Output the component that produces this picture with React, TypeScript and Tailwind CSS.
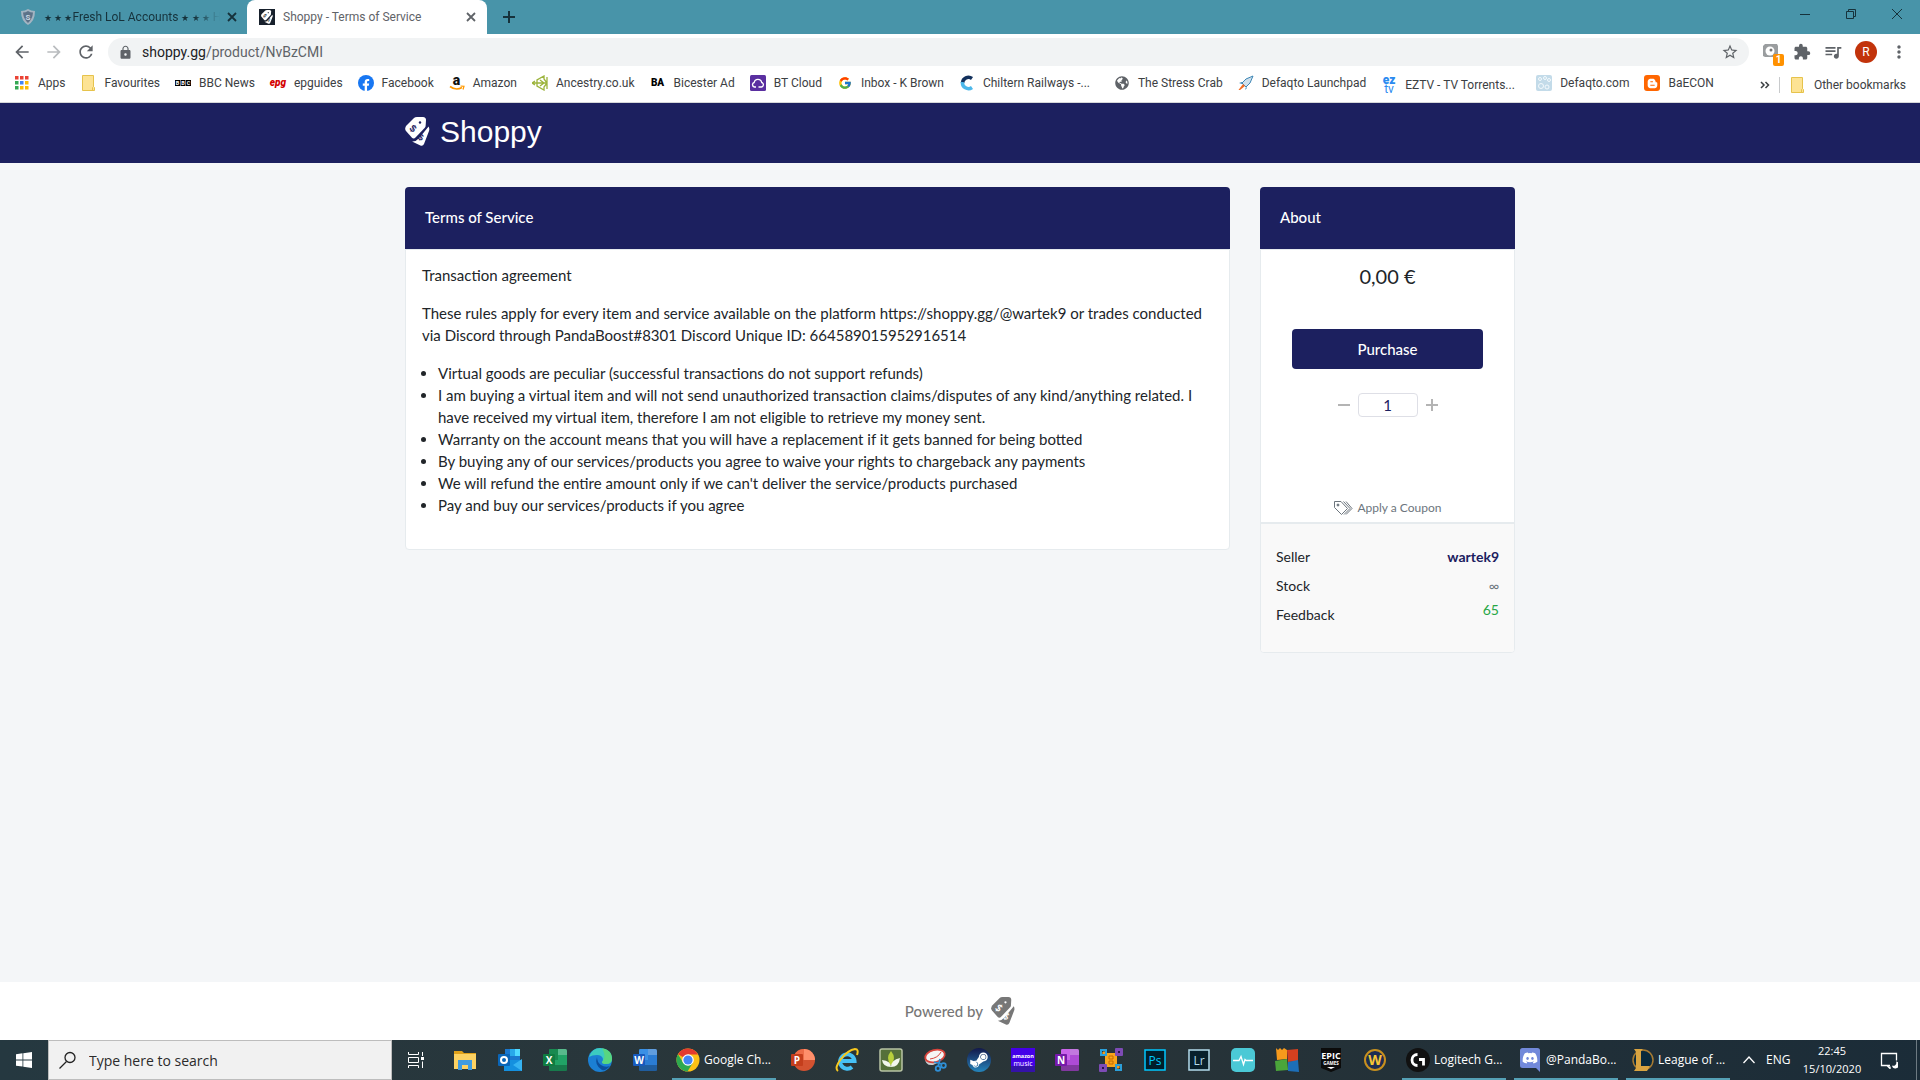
import { useState, type ReactNode } from "react";
import { FaBloggerB, FaDiscord, FaFacebookF, FaGlobeAmericas, FaSteamSymbol } from "react-icons/fa";
import { FcGoogle } from "react-icons/fc";
import {
  MdArrowBack,
  MdArrowForward,
  MdExtension,
  MdLock,
  MdMoreVert,
  MdQueueMusic,
  MdRefresh,
  MdStarBorder,
} from "react-icons/md";

const uiFont = "font-[Roboto,'Open_Sans',sans-serif]";
const pageFont = "font-[Lato,'Open_Sans',sans-serif]";
const winFont = "font-['Open_Sans','Noto_Sans',sans-serif]";

function ShoppyMark({ className, ink }: { className: string; ink: string }) {
  return (
    <svg viewBox="0 0 25 29" className={className} aria-hidden="true">
      <path
        fill="currentColor"
        d="M1 9 9 1Q10 0 12 0h6q3 .3 3 3l-.4 6q-.1 1-1 2L10.500 20.500Q9 22 7.200 21L1 14Q-.6 12 1 9Z"
      />
      <path fill="currentColor" d="M23.600 9.600Q24.800 12 24 14l-5 13q-1 2.300-3.600 1.500L7 24.500q4 .3 7-3.200Z" />
      <circle cx="15" cy="5.500" r="1.200" fill={ink} />
      <text x="8.500" y="15" fontSize="10" fontWeight="700" textAnchor="middle" fill={ink} transform="rotate(40 8.500 11)">
        $
      </text>
      <text x="16" y="23.500" fontSize="9" fontWeight="700" textAnchor="middle" fill={ink} transform="rotate(25 16 20)">
        $
      </text>
    </svg>
  );
}

function Folder() {
  return (
    <svg viewBox="0 0 16 16" className="size-4" aria-hidden="true">
      <path d="M1.500.5h11v11l1 1v3h-12Z" fill="#fde394" stroke="#e6c34c" />
      <path d="M11.500 15.500v-3l1-1" fill="none" stroke="#e6c34c" />
    </svg>
  );
}

const appColors = ["#ea4335", "#ea4335", "#ea4335", "#34a853", "#4285f4", "#fbbc04", "#34a853", "#fbbc04", "#fbbc04"];

type Bookmark = { label: string; icon: ReactNode; wide?: boolean };

const bookmarks: Bookmark[] = [
  {
    label: "Apps",
    icon: (
      <svg viewBox="0 0 16 16" className="size-4">
        {appColors.map((fill, i) => (
          <rect key={i} x={1 + (i % 3) * 5} y={1 + Math.floor(i / 3) * 5} width="3.500" height="3.500" fill={fill} />
        ))}
      </svg>
    ),
  },
  { label: "Favourites", icon: <Folder /> },
  {
    label: "BBC News",
    icon: (
      <svg viewBox="0 0 16 16" className="size-4">
        {["B", "B", "C"].map((letter, i) => (
          <g key={i}>
            <rect x={i * 5.500} y="5" width="5" height="6" fill="#000" />
            <text x={i * 5.500 + 2.500} y="10" fontSize="5.500" fontWeight="700" textAnchor="middle" fill="#fff">
              {letter}
            </text>
          </g>
        ))}
      </svg>
    ),
  },
  { label: "epguides", icon: <span className="text-[10px] leading-4 font-black text-[#d40000] italic">epg</span> },
  {
    label: "Facebook",
    icon: (
      <span className="flex size-4 items-end justify-center rounded-full bg-[#1877f2] text-white">
        <FaFacebookF size={12} />
      </span>
    ),
  },
  {
    label: "Amazon",
    icon: (
      <svg viewBox="0 0 16 16" className="size-4 overflow-visible">
        <text x="7.500" y="10" fontSize="14" fontWeight="900" textAnchor="middle" fill="#111">a</text>
        <path d="M1 11.500q6 4.500 12 1" fill="none" stroke="#f90" strokeWidth="1.600" />
        <path d="m11.500 11 3.500.300-1 3.200" fill="none" stroke="#f90" strokeWidth="1.200" />
      </svg>
    ),
  },
  {
    label: "Ancestry.co.uk",
    icon: (
      <svg viewBox="0 0 16 16" className="size-4" fill="none" stroke="#9cb43c" strokeWidth="1.300">
        <path d="M0 8h15M15 2v12M5 8V5l7-4v3l3 4M5 8v3l7 4v-3l3-4M8 5l4 3-4 3M0 8l3-2M0 8l3 2" />
      </svg>
    ),
  },
  { label: "Bicester Ad", icon: <span className="text-[10px] leading-4 font-black text-black">BA</span> },
  {
    label: "BT Cloud",
    icon: (
      <svg viewBox="0 0 16 16" className="size-4">
        <rect width="16" height="16" rx="1.500" fill="#5a2fa0" />
        <path
          d="M6 12H4.500a2.300 2.300 0 0 1-.3-4.500 3.800 3.800 0 0 1 7.500 0 2.300 2.300 0 0 1-.2 4.500H8.500"
          fill="none"
          stroke="#fff"
          strokeWidth="1.300"
        />
      </svg>
    ),
  },
  { label: "Inbox - K Brown", icon: <FcGoogle size={14} /> },
  {
    label: "Chiltern Railways -...",
    wide: true,
    icon: (
      <svg viewBox="0 0 16 16" className="size-4" fill="none" strokeWidth="3.500">
        <path d="M13 3.500A6 6 0 0 0 3.500 8" stroke="#12305c" />
        <path d="M3.500 7a6 6 0 0 0 9.500 5.500" stroke="#4db8ea" />
      </svg>
    ),
  },
  { label: "The Stress Crab", icon: <FaGlobeAmericas size={14} className="text-[#5f6368]" /> },
  {
    label: "Defaqto Launchpad",
    icon: (
      <svg viewBox="0 0 16 16" className="size-4">
        <path d="m4 8 4-4 7-3-3 7-4 4Z" fill="#cfe0ec" stroke="#3d86b5" />
        <path d="m4 7-3 1 3 1Zm4 5-1 3 2-2Z" fill="#3d86b5" />
        <path d="m5 9 2 2-5 4H.5Z" fill="#f26b21" />
      </svg>
    ),
  },
  {
    label: "EZTV - TV Torrents...",
    wide: true,
    icon: (
      <svg viewBox="0 0 16 20" className="h-5 w-4 overflow-visible" fill="#2a8af0">
        <text x="8" y="9" fontSize="12" fontWeight="900" textAnchor="middle">ez</text>
        <text x="8" y="18" fontSize="12" textAnchor="middle">tv</text>
      </svg>
    ),
  },
  {
    label: "Defaqto.com",
    icon: (
      <svg viewBox="0 0 16 16" className="size-4">
        <rect width="16" height="16" rx="2" fill="#c3dbe9" />
        <g fill="none" stroke="#f4fafd">
          <circle cx="4" cy="4" r="1.500" />
          <circle cx="9" cy="3" r="1.500" />
          <circle cx="13" cy="5" r="1.500" />
          <circle cx="5" cy="11" r="2.500" />
          <circle cx="11" cy="12" r="2" />
        </g>
      </svg>
    ),
  },
  {
    label: "BaECON",
    icon: (
      <span className="flex size-4 items-center justify-center rounded-[3px] bg-[#ff6600] text-white">
        <FaBloggerB size={11} />
      </span>
    ),
  },
];

function CloseIcon({ className }: { className: string }) {
  return (
    <svg viewBox="0 0 16 16" className={className} fill="none" stroke="currentColor" strokeWidth="1.800">
      <path d="m4 4 8 8M12 4l-8 8" />
    </svg>
  );
}

function Stars() {
  return <span className="text-[9px]">★ ★ ★</span>;
}

function TabStrip() {
  return (
    <div className="flex h-[34px] bg-[#4894a9] text-xs text-[#16323b]">
      <div className="flex w-[247px] items-center pr-[7px] pl-[20px]">
        <svg viewBox="0 0 16 16" className="mr-2 size-4 shrink-0">
          <path d="M8 0q3 2 7 2 0 10-7 14Q1 12 1 2q4 0 7-2Z" fill="#a3b4c2" />
          <path d="M8 2q2.500 1.500 5 1.500Q12.500 10 8 14 3.500 10 3 3.500 5.500 3.500 8 2Z" fill="#5d7389" />
          <text x="8" y="11" fontSize="8" fontWeight="700" textAnchor="middle" fill="#c8d6e2">S</text>
        </svg>
        <span className="flex-1 overflow-hidden mask-r-from-85% whitespace-nowrap">
          <Stars />
          Fresh LoL Accounts <Stars /> H
        </span>
        <button aria-label="Close tab" className="ml-1">
          <CloseIcon className="size-4" />
        </button>
      </div>
      <div className="flex w-[240px] items-center rounded-t-lg bg-white px-2 pl-3 text-[#5f6368]">
        <span className="mr-2 flex size-4 items-center justify-center bg-[#17202c] text-white">
          <ShoppyMark className="h-[14px]" ink="#17202c" />
        </span>
        <span className="flex-1 whitespace-nowrap">Shoppy - Terms of Service</span>
        <button aria-label="Close tab">
          <CloseIcon className="size-4" />
        </button>
      </div>
      <button aria-label="New tab" className="ml-3.5">
        <svg viewBox="0 0 16 16" className="size-4" fill="none" stroke="currentColor" strokeWidth="2">
          <path d="M8 2v12M2 8h12" />
        </svg>
      </button>
      <div className="ml-auto flex gap-[30px] pt-1.5 pr-[15px]">
        <button aria-label="Minimise" className="h-4">
          <svg viewBox="0 0 16 16" className="size-4" stroke="currentColor">
            <path d="M3 8.500h10" />
          </svg>
        </button>
        <button aria-label="Restore" className="h-4">
          <svg viewBox="0 0 16 16" className="size-4" fill="none" stroke="currentColor">
            <path d="M3.500 5.500h7v7h-7ZM5.500 5.500v-2h7v7h-2" />
          </svg>
        </button>
        <button aria-label="Close" className="h-4">
          <svg viewBox="0 0 16 16" className="size-4" stroke="currentColor">
            <path d="m3 3 10 10M13 3 3 13" />
          </svg>
        </button>
      </div>
    </div>
  );
}

function Toolbar() {
  return (
    <div className="flex h-9 items-center bg-white pr-[11px] pl-3 text-[#5f6368]">
      <div className="flex w-24 gap-3">
        <button aria-label="Back"><MdArrowBack size={20} /></button>
        <button aria-label="Forward" className="text-[#b9bcbf]"><MdArrowForward size={20} /></button>
        <button aria-label="Reload"><MdRefresh size={20} /></button>
      </div>
      <div className="flex h-7 flex-1 items-center rounded-full bg-[#f1f3f4] px-2.5">
        <MdLock size={15} />
        <div className="relative ml-[9px] flex-1 text-sm">
          <input
            aria-label="Address"
            defaultValue="shoppy.gg/product/NvBzCMI"
            className="block w-full bg-transparent text-[#5f6368] outline-none"
          />
          <span aria-hidden="true" className="pointer-events-none absolute top-0 left-0 bg-[#f1f3f4] text-[#202124]">
            shoppy.gg
          </span>
        </div>
        <button aria-label="Bookmark this tab"><MdStarBorder size={18} /></button>
      </div>
      <div className="ml-3 flex items-center gap-3">
        <button aria-label="Extension" className="relative size-5">
          <svg viewBox="0 0 20 20" className="size-5">
            <path d="M4 2h12l1 2v11H4l-2-1V4Z" fill="#9a9d9f" />
            <circle cx="9" cy="9" r="4.500" fill="#fff" />
            <circle cx="10" cy="8" r="1.500" fill="#777" />
          </svg>
          <span className="absolute top-3 left-3 h-3 w-[11px] rounded-[2px] bg-[#ff9100] text-center text-[10px] leading-3 font-bold text-white">
            1
          </span>
        </button>
        <button aria-label="Extensions"><MdExtension size={18} /></button>
        <button aria-label="Media"><MdQueueMusic size={20} /></button>
        <button aria-label="Profile" className="size-[22px] rounded-full bg-[#c2330b] text-xs text-white">R</button>
        <button aria-label="Menu"><MdMoreVert size={20} /></button>
      </div>
    </div>
  );
}

function BookmarksBar() {
  return (
    <nav className="flex h-[33px] items-center border-b border-[#d5d7d9] bg-white pb-0.5 pl-3.5 text-xs text-[#3c4043]">
      <ul className="flex gap-[15px]">
        {bookmarks.map((b) => (
          <li key={b.label}>
            <a href="#" className="flex items-center gap-2 whitespace-nowrap">
              <span className="flex w-4 justify-center">{b.icon}</span>
              <span className={b.wide ? "w-[116px]" : undefined}>{b.label}</span>
            </a>
          </li>
        ))}
      </ul>
      <button aria-label="More bookmarks" className="ml-auto">
        <svg viewBox="0 0 10 10" className="size-2.5" fill="none" stroke="currentColor" strokeWidth="1.500">
          <path d="m1 2 3 3-3 3M5.500 2l3 3-3 3" />
        </svg>
      </button>
      <a href="#" className="ml-[9px] flex h-4 items-center gap-2 border-l border-[#c8cacc] pr-3.5 pl-2.5">
        <Folder />
        Other bookmarks
      </a>
    </nav>
  );
}

const rules = [
  "Virtual goods are peculiar (successful transactions do not support refunds)",
  "I am buying a virtual item and will not send unauthorized transaction claims/disputes of any kind/anything related. I have received my virtual item, therefore I am not eligible to retrieve my money sent.",
  "Warranty on the account means that you will have a replacement if it gets banned for being botted",
  "By buying any of our services/products you agree to waive your rights to chargeback any payments",
  "We will refund the entire amount only if we can't deliver the service/products purchased",
  "Pay and buy our services/products if you agree",
];

function Card({ title, className, children }: { title: string; className: string; children: ReactNode }) {
  return (
    <section className={className}>
      <h2 className="rounded-t bg-[#1c205f] px-5 pt-[19px] pb-[21px] text-[15px] leading-[22px] font-medium text-white">
        {title}
      </h2>
      <div className="overflow-hidden rounded-b border border-[#e6ebee] bg-white">{children}</div>
    </section>
  );
}

function Terms() {
  return (
    <Card title="Terms of Service" className="min-w-0 flex-1">
      <div className="space-y-4 px-4 pt-3.5 pb-[33px] text-[15px] leading-[22px]">
        <p>Transaction agreement</p>
        <p>
          These rules apply for every item and service available on the platform https://shoppy.gg/@wartek9 or trades
          conducted via Discord through PandaBoost#8301 Discord Unique ID: 664589015952916514
        </p>
        <ul className="list-disc pl-4">
          {rules.map((rule) => (
            <li key={rule}>{rule}</li>
          ))}
        </ul>
      </div>
    </Card>
  );
}

function About() {
  const [quantity, setQuantity] = useState(1);

  return (
    <Card title="About" className="w-[255px] shrink-0">
      <div className="flex flex-col items-center px-[31px] pt-2.5 pb-1">
        <p className="text-xl leading-8">0,00 €</p>
        <button className="mt-[37px] h-10 w-full rounded bg-[#1c205f] text-[15px] font-medium text-white">
          Purchase
        </button>
        <div className="mt-6 flex items-center gap-2 text-[#b4b4b4]">
          <button aria-label="Decrease quantity" onClick={() => setQuantity(Math.max(1, quantity - 1))}>
            <svg viewBox="0 0 12 12" className="size-3" stroke="currentColor" strokeWidth="2">
              <path d="M0 6h12" />
            </svg>
          </button>
          <input
            aria-label="Quantity"
            inputMode="numeric"
            value={quantity}
            onChange={(e) => setQuantity(Number(e.target.value) || 1)}
            className="h-6 w-[60px] rounded border border-[#dedfe6] text-center text-[15px] text-[#1c205f]"
          />
          <button aria-label="Increase quantity" onClick={() => setQuantity(quantity + 1)}>
            <svg viewBox="0 0 12 12" className="size-3" stroke="currentColor" strokeWidth="2">
              <path d="M0 6h12M6 0v12" />
            </svg>
          </button>
        </div>
        <button className="mt-[81px] flex items-center gap-1 text-xs leading-5 text-[#6c757d]">
          <svg viewBox="0 0 20 16" className="h-4 w-5" fill="none" stroke="currentColor">
            <path d="M1.500 1.500v6l7 7 6-6-6.500-7Z" />
            <path d="M10.500 1.500 17 8.500l-6 6M13 1.500l6 7-6 6" />
            <circle cx="5" cy="5" r="1" fill="currentColor" />
          </svg>
          Apply a Coupon
        </button>
      </div>
      <dl className="grid grid-cols-2 gap-y-[7px] border-t-2 border-[#e6ebee] bg-[#f9f9f9] px-[15px] pt-[22px] pb-[26px] text-sm leading-[22px]">
        <dt>Seller</dt>
        <dd className="text-right font-bold text-[#1c205f]">
          <a href="#">wartek9</a>
        </dd>
        <dt>Stock</dt>
        <dd className="text-right text-[#6c757d]">∞</dd>
        <dt>Feedback</dt>
        <dd className="text-right leading-3 text-[#28a745]">65</dd>
      </dl>
    </Card>
  );
}

// Office-style tile: coloured sheet with a lettered badge on its left
function OfficeIcon({ letter, badge, sheet, light }: { letter: string; badge: string; sheet: string; light: string }) {
  return (
    <svg viewBox="0 0 24 24" className="size-6">
      <rect x="6" y="1" width="18" height="22" rx="1.500" fill={sheet} />
      <path d="M6 2.500Q6 1 7.500 1H15v11H6Z" fill={light} />
      <path d="M15 1h7.500Q24 1 24 2.500V7h-9Z" fill="#fff" opacity=".25" />
      <path d="M6 17h18v4.500q0 1.500-1.500 1.500h-15Q6 23 6 21.500Z" opacity=".25" />
      <rect y="6" width="12" height="12" rx="1" fill={badge} />
      <text x="6" y="15.500" fontSize="10" fontWeight="700" textAnchor="middle" fill="#fff">{letter}</text>
    </svg>
  );
}

function AdobeIcon({ text, color, bg }: { text: string; color: string; bg: string }) {
  return (
    <svg viewBox="0 0 24 24" className="size-6">
      <rect x="2" y="2" width="20" height="20" fill={bg} stroke={color} strokeWidth="1.500" />
      <text x="12" y="16.500" fontSize="12" textAnchor="middle" fill={color}>{text}</text>
    </svg>
  );
}

const pinnedLeft: { label: string; icon: ReactNode }[] = [
  {
    label: "File Explorer",
    icon: (
      <svg viewBox="0 0 24 24" className="size-6">
        <path d="M1 3h8l2 2h12v16H1Z" fill="#e0a11a" />
        <path d="M1 6h22v15H1Z" fill="#fdd262" />
        <path d="M5 12h14v10h-4v-5H9v5H5Z" fill="#3f9be0" />
      </svg>
    ),
  },
  {
    label: "Outlook",
    icon: (
      <svg viewBox="0 0 24 24" className="size-6">
        <rect x="7" y="1" width="15" height="14" fill="#1a78cf" />
        <path d="M12 1h5v7h-5Z" fill="#28a8ea" />
        <path d="M17 1h5v7h-5Z" fill="#50d9ff" />
        <path d="M6 12h18v11H6Z" fill="#1490df" />
        <path d="m24 11-9 6 9 6Z" fill="#36b3f2" />
        <rect y="6" width="12" height="12" rx="1" fill="#0a66b8" />
        <circle cx="6" cy="12" r="3" fill="none" stroke="#fff" strokeWidth="2" />
      </svg>
    ),
  },
  { label: "Excel", icon: <OfficeIcon letter="X" badge="#107c41" sheet="#21a366" light="#188a50" /> },
  {
    label: "Edge",
    icon: (
      <svg viewBox="0 0 24 24" className="size-6">
        <circle cx="12" cy="12" r="12" fill="#1b7fd3" />
        <path d="M1 9Q4 0 12 0q12 1 12 11 0 5-6 5-4 0-4-2 1-1 1-3-1-4-6-4-5 0-8 2Z" fill="#3ccbc0" />
        <path d="M14 0q10 2 10 11 0 5-6 5-4 0-4-2 5-5 0-14Z" fill="#62d96b" opacity=".75" />
        <path d="M9 9q-3 8 5 13 4 1 8-4-5 2-9-1-4-3-4-8Z" fill="#0c4f9c" />
      </svg>
    ),
  },
  { label: "Word", icon: <OfficeIcon letter="W" badge="#185abd" sheet="#2b7cd3" light="#3a90e5" /> },
];

const pinnedRight: { label: string; icon: ReactNode }[] = [
  {
    label: "PowerPoint",
    icon: (
      <svg viewBox="0 0 24 24" className="size-6">
        <circle cx="13" cy="12" r="11" fill="#d35230" />
        <path d="M13 1a11 11 0 0 1 11 11H13Z" fill="#ff8f6b" />
        <path d="M13 1A11 11 0 0 0 2 12h11Z" fill="#ed6c47" />
        <rect y="6" width="12" height="12" rx="1" fill="#c43e1c" />
        <text x="6" y="15.500" fontSize="10" fontWeight="700" textAnchor="middle" fill="#fff">P</text>
      </svg>
    ),
  },
  {
    label: "Internet Explorer",
    icon: (
      <svg viewBox="0 0 24 24" className="size-6" fill="none">
        <path d="M6 13h13.500A7.200 7.200 0 1 0 17 19" stroke="#46c0f5" strokeWidth="4" />
        <path d="M3 23Q-1 20 6 11T20 1q4 0 2 6" stroke="#f7c81e" strokeWidth="2" />
      </svg>
    ),
  },
  {
    label: "Family tree",
    icon: (
      <svg viewBox="0 0 24 24" className="size-6">
        <rect x="1" y="1" width="22" height="22" rx="2" fill="#56703a" stroke="#b8c4a4" strokeWidth="1.500" />
        <path d="M12 3q6 7 0 15-6-8 0-15Z" fill="#b9cf3c" />
        <path d="M12 19q0-7 9-9-1 9-9 9ZM12 19q0-6-9-7 1 7 9 7Z" fill="#f3f6ec" />
      </svg>
    ),
  },
  {
    label: "Snipping Tool",
    icon: (
      <svg viewBox="0 0 24 24" className="size-6" fill="none">
        <path d="M2 10Q2 18 10 17q9-3 12-12Z" fill="#c9ced2" />
        <ellipse cx="12" cy="8" rx="10" ry="6" fill="#f5f5f5" stroke="#d8443c" strokeWidth="1.800" transform="rotate(-15 12 8)" />
        <path d="M7 11q8-1 11-7" stroke="#d8443c" />
        <circle cx="15" cy="20.500" r="2.300" stroke="#2f8fd6" strokeWidth="1.800" />
        <circle cx="20.500" cy="17.500" r="2.300" stroke="#2f8fd6" strokeWidth="1.800" />
        <path d="m11 14 8 2M17 11l-2 8" stroke="#2f8fd6" strokeWidth="1.800" />
      </svg>
    ),
  },
  {
    label: "Steam",
    icon: (
      <span className="flex size-6 items-center justify-center rounded-full bg-linear-to-b from-[#12184a] to-[#2486bd] text-white">
        <FaSteamSymbol size={20} />
      </span>
    ),
  },
  {
    label: "Amazon Music",
    icon: (
      <svg viewBox="0 0 24 24" className="size-6">
        <rect width="24" height="24" fill="#4400e8" />
        <path d="M0 18h24v6H0Z" fill="#3412a8" />
        <text x="12" y="10" fontSize="5.500" fontWeight="700" textAnchor="middle" fill="#fff">amazon</text>
        <text x="12" y="18" fontSize="7" textAnchor="middle" fill="#fff">music</text>
      </svg>
    ),
  },
  { label: "OneNote", icon: <OfficeIcon letter="N" badge="#7719aa" sheet="#ae4bd5" light="#ca64ea" /> },
  {
    label: "Workspace",
    icon: (
      <svg viewBox="0 0 24 24" className="size-6">
        <path d="m4 4 16 16M20 4 4 20" stroke="#f39a1e" strokeWidth="3" />
        <rect x="6" y="5" width="12" height="14" fill="#f9a51b" />
        <path d="M10 8h4v3h-4zM10 13h4v3h-4z" fill="none" stroke="#c76c00" />
        <g fill="#7d4bb5">
          <rect x="16" y="0" width="8" height="8" rx="1" />
          <rect x="0" y="16" width="8" height="8" rx="1" />
        </g>
        <path d="M2 2h5v5H2zM17 17h5v5h-5z" fill="none" stroke="#2c9fd9" strokeWidth="2" />
        <path d="M19 3h2v2h-2zM3 19h2v2H3z" fill="#2a1447" />
      </svg>
    ),
  },
  { label: "Photoshop", icon: <AdobeIcon text="Ps" color="#00c8ff" bg="#001e2b" /> },
  { label: "Lightroom", icon: <AdobeIcon text="Lr" color="#b4dcec" bg="#08202c" /> },
  {
    label: "Health monitor",
    icon: (
      <svg viewBox="0 0 24 24" className="size-6">
        <rect width="24" height="24" rx="5" fill="#4bc9d6" />
        <path d="M2 12.500h6l2-4 2.500 8 1.500-5 1 1h7" fill="none" stroke="#fff" strokeWidth="1.300" />
      </svg>
    ),
  },
  {
    label: "AVG",
    icon: (
      <svg viewBox="0 0 24 24" className="size-6">
        <path d="m1 0 2 2 2-2 2 2 2-2 3 2v9L2 12Z" fill="#f79a1c" />
        <path d="m12 2 11-1v12l-10 1Z" fill="#d5401f" />
        <path d="m0 13 12-2 1 11-12 1Z" fill="#4aa53a" />
        <path d="m13 14 10-2 1 12-11-1Z" fill="#1d6fb8" />
      </svg>
    ),
  },
  {
    label: "Epic Games",
    icon: (
      <svg viewBox="0 0 24 24" className="size-6">
        <path d="M2 0h20v20l-10 4-10-4Z" fill="#0b0b0b" />
        <text x="12" y="11" fontSize="9" fontWeight="700" textAnchor="middle" fill="#fff">EPIC</text>
        <text x="12" y="17" fontSize="4.500" fontWeight="700" textAnchor="middle" fill="#fff">GAMES</text>
        <path d="M8 19h8l-4 2Z" fill="#fff" />
      </svg>
    ),
  },
  {
    label: "World of Warcraft",
    icon: (
      <svg viewBox="0 0 24 24" className="size-6">
        <circle cx="12" cy="12" r="10" fill="#1d2c52" stroke="#c8901e" strokeWidth="2" />
        <text x="12" y="17" fontSize="14" fontWeight="700" textAnchor="middle" fill="#f7c535">W</text>
      </svg>
    ),
  },
];

const chromeIcon = (
  <svg viewBox="0 0 24 24" className="size-6">
    <circle cx="12" cy="12" r="11.500" fill="#fbc116" />
    <path d="M12 12 2 6.200A11.500 11.500 0 0 1 22 6.500H12Z" fill="#e33b2e" />
    <path d="M2 6.200A11.500 11.500 0 0 0 11.500 23.500L16.700 15 7 14.500Z" fill="#2da94f" />
    <circle cx="12" cy="12" r="5.800" fill="#fff" />
    <circle cx="12" cy="12" r="4.600" fill="#4285f4" />
  </svg>
);

const openWindows = [
  {
    label: "Logitech G...",
    icon: (
      <svg viewBox="0 0 24 24" className="size-6">
        <circle cx="12" cy="12" r="12" fill="#111" />
        <path d="M11.500 6.500a5.500 5.500 0 0 0 0 11M13 11.500h4.500v6" fill="none" stroke="#fff" strokeWidth="2.800" />
      </svg>
    ),
  },
  {
    label: "@PandaBo...",
    icon: (
      <svg viewBox="0 0 20 24" className="h-6 w-5">
        <path d="M2.500 0h15Q20 0 20 2.500V24l-4-4H2.500Q0 20 0 17.500v-15Q0 0 2.500 0Z" fill="#7289da" />
        <FaDiscord x="2" y="2" size={16} color="#fff" />
      </svg>
    ),
  },
  {
    label: "League of ...",
    icon: (
      <svg viewBox="0 0 24 24" className="size-6">
        <circle cx="13" cy="12" r="10" fill="#0b2a3c" stroke="#a87b32" strokeWidth="1.500" />
        <path d="M4 1h9l-2 2v15h9l-3 5H4l2-3V4Z" fill="#d9a441" />
      </svg>
    ),
  },
];

function WindowButton({ label, icon }: { label: string; icon: ReactNode }) {
  return (
    <button className="flex h-full w-[104px] items-center gap-1 border-b-2 border-[#55a0b5] pt-0.5 pl-1 text-xs whitespace-nowrap">
      <span className="flex w-6 shrink-0 justify-center">{icon}</span>
      <span>{label}</span>
    </button>
  );
}

function Taskbar() {
  return (
    <div className={`flex h-10 items-center bg-linear-to-r from-[#253840] via-[#2a3538] to-[#1b2c38] text-white ${winFont}`}>
      <button aria-label="Start" className="flex w-12 justify-center">
        <svg viewBox="0 0 16 16" className="size-4" fill="#fff">
          <path d="m0 2.200 6.500-.9v6.200H0ZM7.300 1.200 16 0v7.500H7.300ZM0 8.400h6.500v6.200L0 13.700ZM7.300 8.400H16V16l-8.700-1.200Z" />
        </svg>
      </button>
      <label className="flex h-full w-[344px] items-center gap-3 border border-[#bdbdbd] bg-[#f1f1f1] px-2.5 text-[#222]">
        <svg viewBox="0 0 18 18" className="size-[18px] shrink-0" fill="none" stroke="currentColor" strokeWidth="1.300">
          <circle cx="11" cy="6.500" r="5" />
          <path d="m7.500 10.500-7 7" />
        </svg>
        <input
          aria-label="Search"
          placeholder="Type here to search"
          className="w-full bg-transparent pt-0.5 text-sm outline-none placeholder:text-[#2b2b2b]"
        />
      </label>
      <button aria-label="Task view" className="ml-0.5 flex w-11 justify-center">
        <svg viewBox="0 0 16 16" className="size-4" fill="none" stroke="#fff">
          <path d="M.5 0v2.500h10V0M.5 16v-2.500h10V16M.5 5.500h10v5H.5ZM14.500 0v4M14.500 9.500V16" />
          <path d="M13 5h3v3h-3Z" fill="#fff" stroke="none" />
        </svg>
      </button>
      <div className="ml-[5px] flex gap-px">
        {pinnedLeft.map((p) => (
          <button key={p.label} aria-label={p.label} className="flex w-11 justify-center">{p.icon}</button>
        ))}
      </div>
      <div className="ml-[5px] flex h-full">
        <WindowButton label="Google Ch..." icon={chromeIcon} />
      </div>
      <div className="ml-[5px] flex">
        {pinnedRight.map((p) => (
          <button key={p.label} aria-label={p.label} className="flex w-11 justify-center">{p.icon}</button>
        ))}
      </div>
      <div className="ml-[5px] flex h-full gap-2">
        {openWindows.map((w) => (
          <WindowButton key={w.label} label={w.label} icon={w.icon} />
        ))}
      </div>
      <div className="ml-auto flex h-full items-center text-xs">
        <svg viewBox="0 0 14 14" className="mr-2.5 size-3.5" fill="none" stroke="#fff" strokeWidth="1.300">
          <path d="m1.500 10 5.500-6 5.500 6" />
        </svg>
        <span className="w-9">ENG</span>
        <div className="w-[60px] text-center text-[11px] leading-[18px]">
          <p>22:45</p>
          <p>15/10/2020</p>
        </div>
        <button aria-label="Notifications" className="mx-[18px]">
          <svg viewBox="0 0 18 18" className="size-[18px]" fill="none" stroke="#fff" strokeWidth="1.300">
            <path d="M10 14.500H1.500v-12h15v7M7 14.500l3 3v-2" />
            <path d="M16 10.500a3 3 0 0 1-4 4 3.500 3.500 0 1 0 4-4Z" fill="#fff" stroke="none" />
          </svg>
        </button>
        <span className="h-full w-1 border-l border-[#6d7a82]" />
      </div>
    </div>
  );
}

export default function App() {
  return (
    <div className={`flex min-h-screen flex-col bg-[#f4f6f8] text-[#212529] ${uiFont}`}>
      <TabStrip />
      <Toolbar />
      <BookmarksBar />
      <div className={`flex flex-1 flex-col ${pageFont}`}>
        <header className="bg-[#1c205f] text-white">
          <div className="mx-auto flex h-[60px] w-full max-w-[1110px] items-center gap-2.5 pb-[3px] font-['Liberation_Sans',Arial,sans-serif]">
            <ShoppyMark className="h-[29px]" ink="#1c205f" />
            <a href="#" className="text-3xl leading-8">Shoppy</a>
          </div>
        </header>
        <main className="mx-auto flex w-full max-w-[1110px] flex-1 items-start gap-[30px] py-6">
          <Terms />
          <About />
        </main>
        <footer className="flex h-[58px] items-center justify-center gap-2 bg-white text-[15px] font-medium text-[#777]">
          <span>Powered by</span>
          <ShoppyMark className="h-7" ink="#ffffff" />
        </footer>
      </div>
      <Taskbar />
    </div>
  );
}
